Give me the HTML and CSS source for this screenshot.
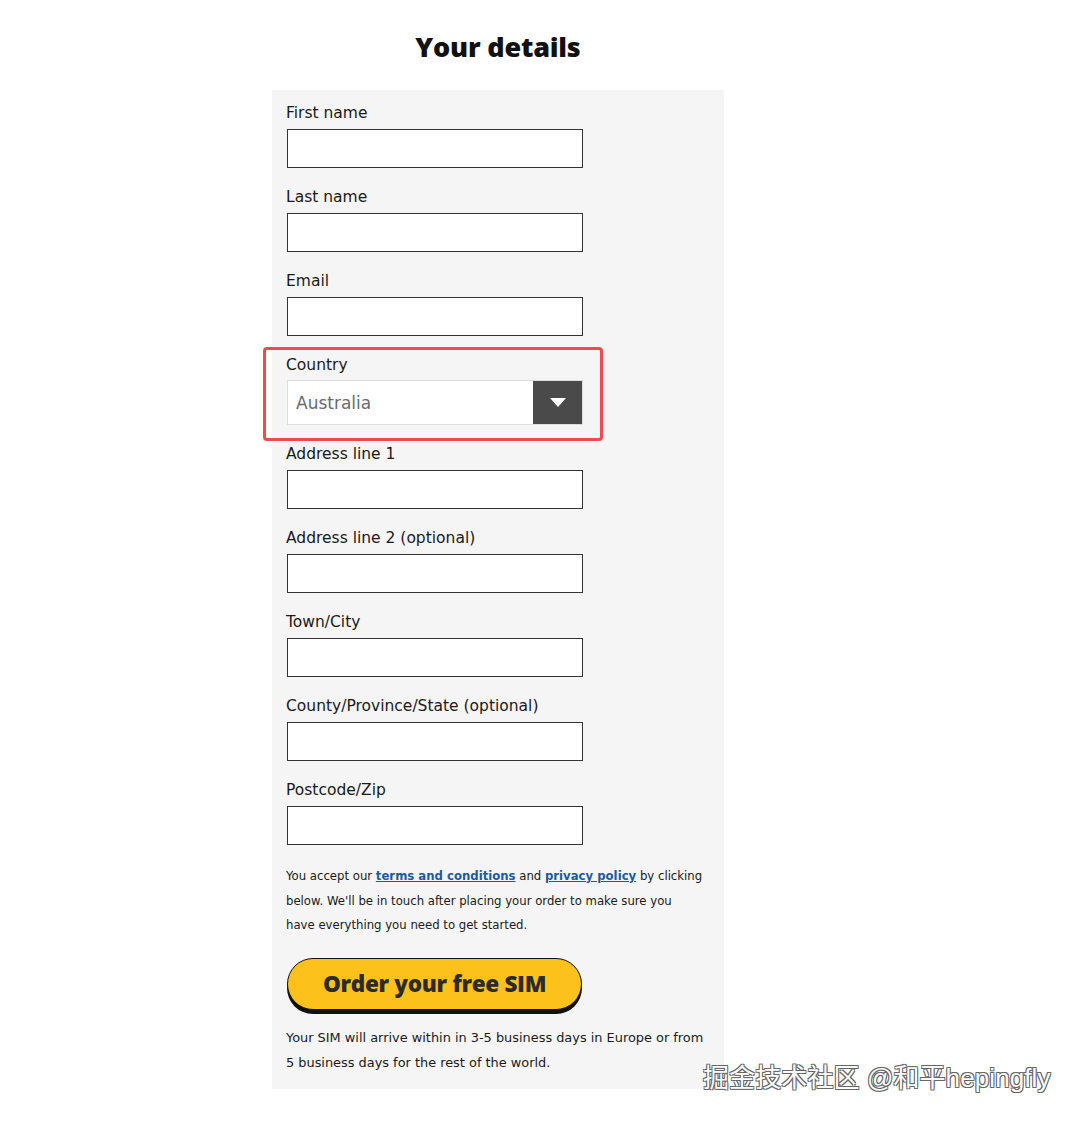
FILE: index.html
```html
<!DOCTYPE html>
<html lang="en">
<head>
<meta charset="utf-8">
<title>Your details</title>
<link rel="stylesheet" href="styles.css">
</head>
<body>
<main class="page">
  <h1 class="title">Your details</h1>
  <form class="panel">
    <div class="field">
      <label class="label">First name</label>
      <input class="input" type="text">
    </div>
    <div class="field">
      <label class="label">Last name</label>
      <input class="input" type="text">
    </div>
    <div class="field">
      <label class="label">Email</label>
      <input class="input" type="email">
    </div>
    <div class="field field--highlight">
      <label class="label">Country</label>
      <div class="select">
        <span class="select-value">Australia</span>
        <span class="select-btn"><svg width="16" height="9" viewBox="0 0 16 9"><path d="M0 0H16L8 9Z" fill="#fff"/></svg></span>
      </div>
    </div>
    <div class="field">
      <label class="label">Address line 1</label>
      <input class="input" type="text">
    </div>
    <div class="field">
      <label class="label">Address line 2 (optional)</label>
      <input class="input" type="text">
    </div>
    <div class="field">
      <label class="label">Town/City</label>
      <input class="input" type="text">
    </div>
    <div class="field">
      <label class="label">County/Province/State (optional)</label>
      <input class="input" type="text">
    </div>
    <div class="field">
      <label class="label">Postcode/Zip</label>
      <input class="input" type="text">
    </div>
    <p class="terms">You accept our <a class="link" href="#">terms and conditions</a> and <a class="link" href="#">privacy policy</a> by clicking below. We'll be in touch after placing your order to make sure you have everything you need to get started.</p>
    <button class="cta" type="button">Order your free SIM</button>
    <p class="note">Your SIM will arrive within in 3-5 business days in Europe or from 5 business days for the rest of the world.</p>
  </form>
</main>
<div class="watermark">掘金技术社区 @和平hepingfly</div>
</body>
</html>
```
FILE: styles.css
```css
html, body {
  margin: 0;
  padding: 0;
  background: #ffffff;
}
body {
  font-family: "DejaVu Sans", "Open Sans", sans-serif;
  color: #1a1a1a;
  position: relative;
  min-height: 1123px;
}
.page {
  width: 452px;
  margin-left: 272px;
  padding-top: 34px;
}
.title {
  margin: 0 0 30px;
  height: 26px;
  line-height: 26px;
  font-family: "Open Sans", sans-serif;
  font-size: 27px;
  font-weight: 800;
  text-align: center;
  color: #111;
  letter-spacing: -0.2px;
}
.panel {
  background: #f5f5f5;
  padding: 13px 14px 14px 14px;
  display: flex;
  flex-direction: column;
}
.field {
  display: flex;
  flex-direction: column;
  gap: 6px;
  margin-bottom: 19px;
}
.label {
  font-size: 15.5px;
  line-height: 20px;
  color: #1a1a1a;
}
.input {
  box-sizing: border-box;
  width: 296px;
  height: 39px;
  margin: 0 0 0 1px;
  border: 1.5px solid #333;
  background: #fff;
  padding: 0;
}
.field--highlight {
  position: relative;
  gap: 5px;
}
.field--highlight::after {
  content: "";
  position: absolute;
  left: -23px;
  top: -8px;
  width: 340px;
  height: 94px;
  box-sizing: border-box;
  border: 3.5px solid #f04a50;
  border-radius: 4px;
  pointer-events: none;
}
.select {
  box-sizing: border-box;
  width: 296px;
  height: 45px;
  margin-left: 1px;
  border: 1px solid #ddd;
  background: #fff;
  display: flex;
  align-items: stretch;
}
.select-value {
  flex: 1;
  display: flex;
  align-items: center;
  padding-left: 8px;
  font-size: 17px;
  color: #6b6b6b;
}
.select-btn {
  width: 49px;
  background: #4a4a4a;
  display: flex;
  align-items: center;
  justify-content: center;
}
.terms {
  margin: 0;
  width: 417px;
  font-size: 11.7px;
  line-height: 24.5px;
  color: #1a1a1a;
}
.link {
  color: #1a5c9a;
  font-weight: 700;
  text-decoration: underline;
}
.cta {
  box-sizing: border-box;
  width: 295px;
  height: 52px;
  margin: 20px 0 0 1px;
  border: 1.5px solid #111;
  border-radius: 26px;
  background: #fcc21b;
  box-shadow: 0 4px 0 #111;
  font-family: "Open Sans", sans-serif;
  font-size: 22.5px;
  font-weight: 800;
  color: #2b2b2b;
  letter-spacing: -0.3px;
  cursor: pointer;
}
.note {
  margin: 15px 0 0;
  font-size: 12.9px;
  line-height: 25px;
  color: #1a1a1a;
}
.watermark {
  position: absolute;
  left: 703px;
  top: 1062px;
  font-family: "Liberation Sans", "Noto Sans CJK SC", sans-serif;
  font-size: 26px;
  line-height: 32px;
  letter-spacing: 0.1px;
  color: #fff;
  text-shadow: -1px -1px 0 #666, 1px -1px 0 #666, -1px 1px 0 #666, 1px 1px 0 #666;
}
```
